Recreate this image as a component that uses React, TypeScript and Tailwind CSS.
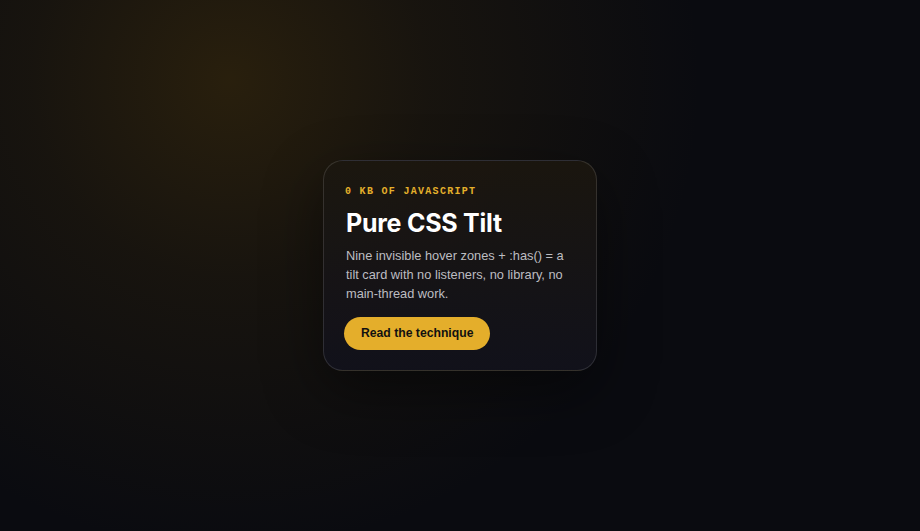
export default function App() {
  return (
    <div
      className="relative flex h-[531px] w-full items-center justify-center overflow-hidden bg-[#0a0b10]"
      style={{
        backgroundImage:
          'radial-gradient(circle at 230px 80px, rgba(112,78,6,0.30) 0px, rgba(85,60,8,0.18) 200px, rgba(11,11,16,0) 470px)',
      }}
    >
      <div className="w-[274px] rounded-[20px] border border-white/[0.12] bg-gradient-to-b from-[#1c170f]/90 to-[#12121c]/90 pl-[21px] pr-[19px] pt-[24px] pb-[20px] shadow-[0_20px_60px_rgba(0,0,0,0.45)]">
        <div className="font-['Liberation_Mono',monospace] text-[10px] font-bold uppercase leading-[14px] tracking-[0.13em] text-[#e5b02b]">
          0 KB of JavaScript
        </div>
        <h1 className="mt-[9px] pl-px font-['Inter',sans-serif] text-[25px] font-bold leading-[30px] tracking-[-0.01em] text-white">
          Pure CSS Tilt
        </h1>
        <p className="mt-[8px] pl-px font-['Liberation_Sans',Arial,sans-serif] text-[12.8px] leading-[19px] text-[#bdbdc1]">
          Nine invisible hover zones + :has() = a tilt card with no listeners, no library, no main-thread work.
        </p>
        <button className="mt-[14px] -ml-px h-[33px] rounded-full bg-[#e4ae2b] px-[17px] font-['Liberation_Sans',Arial,sans-serif] text-[12.2px] font-bold text-[#111]">
          Read the technique
        </button>
      </div>
    </div>
  );
}
